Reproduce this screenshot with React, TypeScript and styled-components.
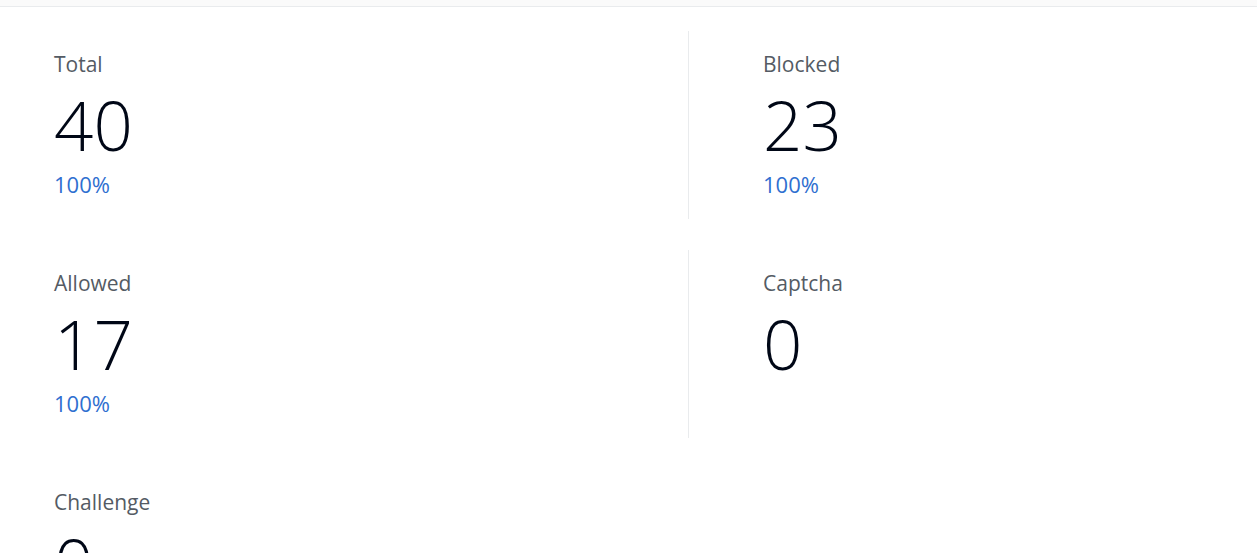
import React from "react";
import styled, { createGlobalStyle } from "styled-components";

const Global = createGlobalStyle`
  html, body { margin: 0; padding: 0; background: #ffffff; }
  body { font-family: "Open Sans", "Noto Sans", sans-serif; overflow: hidden; }
`;

const TopBar = styled.div`
  height: 6px;
  background: #fafafa;
  border-bottom: 1px solid #e9ebed;
`;

const Grid = styled.div`
  display: grid;
  grid-template-columns: 634px 1fr;
  row-gap: 31px;
  padding: 24px 0 0 54px;
`;

const Cell = styled.div<{ $divider?: boolean }>`
  padding: 18px 0 19px ${(p) => (p.$divider ? "74px" : "0")};
  border-left: ${(p) => (p.$divider ? "1px solid #e9ebed" : "none")};
  display: flex;
  flex-direction: column;
  align-items: flex-start;
`;

const Label = styled.div`
  font-size: 21px;
  line-height: 30px;
  color: #545b64;
`;

const Value = styled.div`
  font-size: 69px;
  line-height: 84px;
  font-weight: 300;
  color: #000716;
  margin-top: 3px;
`;

const Percent = styled.a`
  font-size: 22px;
  line-height: 30px;
  color: #2f6fd0;
  text-decoration: none;
  margin-top: 3px;
  margin-bottom: 1px;
`;

type Stat = { label: string; value: string; percent?: string };

const stats: Stat[] = [
  { label: "Total", value: "40", percent: "100%" },
  { label: "Blocked", value: "23", percent: "100%" },
  { label: "Allowed", value: "17", percent: "100%" },
  { label: "Captcha", value: "0" },
  { label: "Challenge", value: "0" },
];

export default function App() {
  return (
    <>
      <Global />
      <TopBar />
      <Grid>
        {stats.map((s, i) => (
          <Cell key={s.label} $divider={i % 2 === 1}>
            <Label>{s.label}</Label>
            <Value>{s.value}</Value>
            {s.percent && <Percent href="#">{s.percent}</Percent>}
          </Cell>
        ))}
      </Grid>
    </>
  );
}
